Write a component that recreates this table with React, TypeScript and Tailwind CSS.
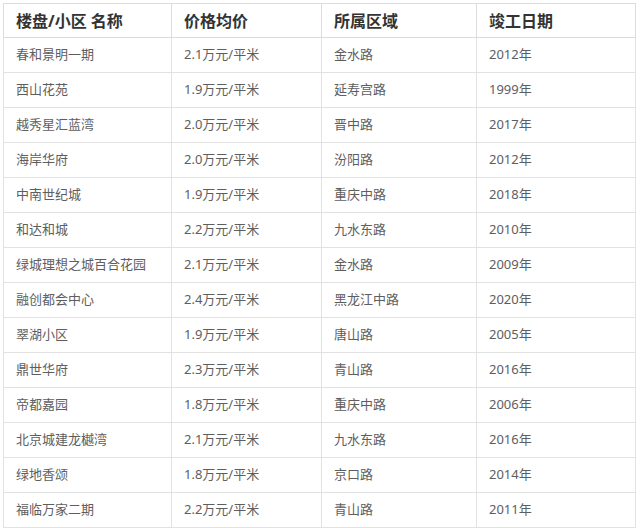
const rows = [
  ["春和景明一期", "2.1万元/平米", "金水路", "2012年"],
  ["西山花苑", "1.9万元/平米", "延寿宫路", "1999年"],
  ["越秀星汇蓝湾", "2.0万元/平米", "晋中路", "2017年"],
  ["海岸华府", "2.0万元/平米", "汾阳路", "2012年"],
  ["中南世纪城", "1.9万元/平米", "重庆中路", "2018年"],
  ["和达和城", "2.2万元/平米", "九水东路", "2010年"],
  ["绿城理想之城百合花园", "2.1万元/平米", "金水路", "2009年"],
  ["融创都会中心", "2.4万元/平米", "黑龙江中路", "2020年"],
  ["翠湖小区", "1.9万元/平米", "唐山路", "2005年"],
  ["鼎世华府", "2.3万元/平米", "青山路", "2016年"],
  ["帝都嘉园", "1.8万元/平米", "重庆中路", "2006年"],
  ["北京城建龙樾湾", "2.1万元/平米", "九水东路", "2016年"],
  ["绿地香颂", "1.8万元/平米", "京口路", "2014年"],
  ["福临万家二期", "2.2万元/平米", "青山路", "2011年"],
];

const headers = ["楼盘/小区 名称", "价格均价", "所属区域", "竣工日期"];

export default function App() {
  return (
    <div className="w-[640px] h-[528px] bg-white pt-[3px] pl-[3px] overflow-hidden font-['Noto_Sans','Noto_Sans_CJK_SC',sans-serif]">
      <table className="w-[632px] table-fixed border-collapse border border-[#dcdcdc]">
        <colgroup>
          <col className="w-[168px]" />
          <col className="w-[150px]" />
          <col className="w-[155px]" />
          <col className="w-[159px]" />
        </colgroup>
        <thead>
          <tr className="h-[34px]">
            {headers.map((h) => (
              <th
                key={h}
                className="border border-[#dcdcdc] px-3 pt-px text-left text-[16px] font-bold text-[#333] whitespace-nowrap"
              >
                {h}
              </th>
            ))}
          </tr>
        </thead>
        <tbody>
          {rows.map((r) => (
            <tr key={r[0]} className="h-[35px]">
              {r.map((c, i) => (
                <td
                  key={i}
                  className="border border-[#e2e2e2] px-3 text-[13px] text-[#5e5e5e] whitespace-nowrap"
                >
                  {c}
                </td>
              ))}
            </tr>
          ))}
        </tbody>
      </table>
    </div>
  );
}
